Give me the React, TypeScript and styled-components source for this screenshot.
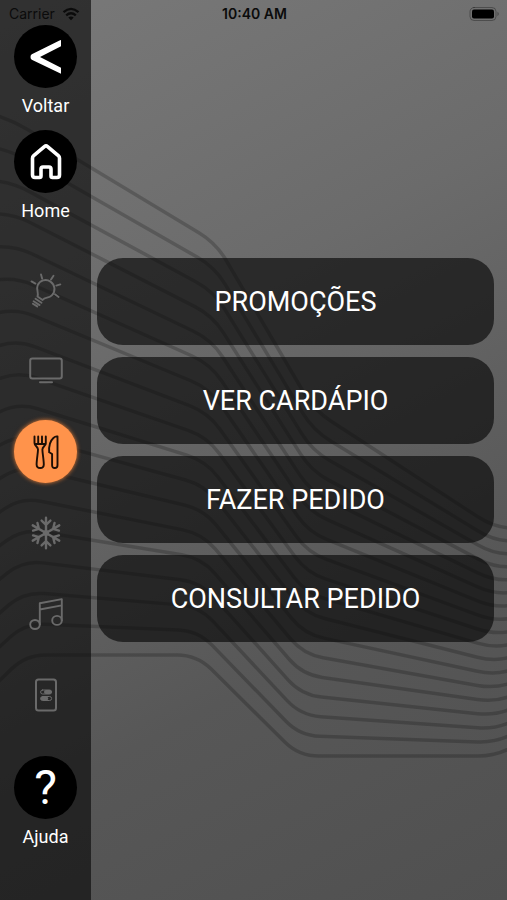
import React from "react";
import styled, { createGlobalStyle } from "styled-components";

const GlobalStyle = createGlobalStyle`
  *, *::before, *::after { box-sizing: border-box; }
  body { margin: 0; background: #5c5c5c; }
  button { font: inherit; color: inherit; border: 0; padding: 0; background: none; cursor: pointer; }
`;

const Screen = styled.div`
  position: relative;
  isolation: isolate;
  display: flex;
  min-height: 100vh;
  overflow: hidden;
  color: #fff;
  font-family: Roboto, "Noto Sans", sans-serif;
  background: linear-gradient(152deg, #797979 0%, #6b6b6b 35%, #575757 70%, #505050 100%);
`;

const Backdrop = styled.svg`
  position: absolute;
  inset: 0;
  z-index: -1;
  width: 100%;
  height: 100%;
  fill: none;
  stroke: #000;
  stroke-opacity: 0.2;
  stroke-width: 3.5;
`;

const StatusBar = styled.header`
  position: absolute;
  inset: 0 0 auto;
  z-index: 1;
  display: grid;
  grid-template-columns: 1fr auto 1fr;
  align-items: center;
  height: 27px;
  padding: 0 7px 0 9px;
  color: #0b0b0b;
  font-family: Inter, sans-serif;
  font-size: 14px;
  pointer-events: none;
`;

const Carrier = styled.span`
  display: flex;
  align-items: center;
  gap: 7px;
`;

const Clock = styled.time`
  font-weight: 600;
`;

const BatterySlot = styled.span`
  display: flex;
  justify-content: flex-end;
`;

const Sidebar = styled.aside`
  flex: none;
  display: flex;
  flex-direction: column;
  align-items: center;
  gap: 6px;
  width: 91px;
  padding: 25px 0 45px;
  background: rgba(10, 10, 10, 0.65);
`;

const LabeledButton = styled.button<{ $last?: boolean }>`
  display: flex;
  flex-direction: column;
  align-items: center;
  margin-top: ${(p) => (p.$last ? "auto" : "0")};
  font-size: 18px;
  line-height: 36px;
`;

const Disc = styled.span`
  display: grid;
  place-items: center;
  width: 63px;
  height: 63px;
  border-radius: 50%;
  background: #000;
`;

const QuestionMark = styled.span`
  font-size: 48px;
  font-weight: 400;
  line-height: 63px;
`;

const CategoryNav = styled.nav`
  display: flex;
  flex-direction: column;
  gap: 18px;
  margin-top: 23px;
`;

const CategoryButton = styled.button<{ $active?: boolean }>`
  display: grid;
  place-items: center;
  width: 63px;
  height: 63px;
  border-radius: 50%;
  color: ${(p) => (p.$active ? "#1d0f06" : "#6a6a6a")};
  background: ${(p) => (p.$active ? "#ff934b" : "transparent")};
  box-shadow: ${(p) => (p.$active ? "0 0 4px #e87d35" : "none")};
`;

const Content = styled.main`
  flex: 1;
  display: flex;
  flex-direction: column;
  justify-content: center;
  gap: 12px;
  min-width: 0;
  padding: 0 13px 0 6px;
`;

const MenuButton = styled.button`
  height: 87px;
  border-radius: 26px;
  background: rgba(10, 10, 10, 0.67);
  font-size: 27px;
  line-height: 32px;
`;

const Glyph = styled.svg`
  display: block;
  fill: none;
  stroke: currentColor;
  stroke-width: 2;
  stroke-linecap: round;
  stroke-linejoin: round;
`;

type Point = [number, number];

const UPPER: Point[] = [[-30, 108], [10, 119], [216, 243], [314, 410], [495, 528], [530, 528]];
const LOWER: Point[] = [[-30, 709], [26, 655], [197, 655], [299, 756], [498, 756], [530, 736]];
const LINE_COUNT = 18;

function contour(t: number) {
  const pts = UPPER.map(([x, y], i): Point => [x + (LOWER[i][0] - x) * t, y + (LOWER[i][1] - y) * t]);
  let d = `M${pts[0].join(" ")}`;
  for (let i = 1; i < pts.length - 1; i++) {
    const [x, y] = pts[i];
    const near = (other: Point) => {
      const len = Math.hypot(other[0] - x, other[1] - y);
      const r = Math.min(20, len / 2) / len;
      return `${x + (other[0] - x) * r} ${y + (other[1] - y) * r}`;
    };
    d += `L${near(pts[i - 1])}Q${x} ${y} ${near(pts[i + 1])}`;
  }
  return `${d}L${pts[pts.length - 1].join(" ")}`;
}

const CONTOURS = Array.from({ length: LINE_COUNT }, (_, i) => contour(i / (LINE_COUNT - 1)));

const WifiIcon = () => (
  <Glyph width="18" height="14" viewBox="0 0 18 14" aria-hidden="true">
    <path d="M1.5 5.2Q9-1.4 16.5 5.2" strokeWidth="2.3" strokeLinecap="butt" />
    <path d="M4.2 8.3Q9 4.2 13.8 8.3" strokeWidth="2.3" strokeLinecap="butt" />
    <path d="M6.3 10.5Q9 8.4 11.7 10.5L9 13.2Z" fill="currentColor" stroke="none" />
  </Glyph>
);

const BatteryIcon = () => (
  <Glyph width="31" height="14" viewBox="0 0 31 14" aria-hidden="true">
    <rect x="1" y=".5" width="26" height="13" rx="4" strokeWidth="1" opacity=".35" />
    <rect x="3" y="2.5" width="22" height="9" rx="2" fill="#000" stroke="none" />
    <path d="M28.5 4.8Q31 7 28.5 9.2Z" fill="currentColor" stroke="none" opacity=".4" />
  </Glyph>
);

const BackIcon = () => (
  <Glyph width="32" height="36" viewBox="0 0 32 36" aria-hidden="true">
    <path d="M31 1.2V7.3L10 18L31 28.7V34.8L1.8 20.8Q.5 20 .5 18T1.8 15.2L29 1.7Q31 .6 31 1.2Z" fill="#fff" stroke="none" />
  </Glyph>
);

const HomeIcon = () => (
  <Glyph width="34" height="36" viewBox="0 0 34 36" aria-hidden="true">
    <path
      d="M3.5 14.2Q3.5 12.7 4.7 11.7L15.4 2.6Q17 1.3 18.6 2.6L29.3 11.7Q30.5 12.7 30.5 14.2V31Q30.5 33.5 28 33.5H23.5Q22 33.5 22 32V25Q22 23 20 23H14Q12 23 12 25V32Q12 33.5 10.5 33.5H6Q3.5 33.5 3.5 31Z"
      strokeWidth="3.6"
    />
  </Glyph>
);

const BulbIcon = () => (
  <Glyph width="34" height="36" viewBox="0 0 34 36" aria-hidden="true">
    <g strokeWidth="1.9">
      <path d="M8.5 24.5C10 21 6.9 17.5 8.7 13.2C10.8 8.2 17 6.6 21.5 9.6C26.3 12.9 26.8 19.5 22.8 23.4C19.8 26.4 16 25 13.6 28Z" />
      <path d="M6.5 26.8L12.5 30.7M4.6 29.2L10.6 33.1M3.9 31.8L8.2 34.4" />
      <path d="M12 2.5L13.2 6.7M24.5 3.8L22 7.6M2.5 9.4L6.4 11.6M31.3 12.4L27.3 13.6M26 22.3L29.6 25" />
    </g>
  </Glyph>
);

const TvIcon = () => (
  <Glyph width="34" height="28" viewBox="0 0 34 28" aria-hidden="true">
    <rect x="1.2" y="1.5" width="31.6" height="20" rx="2.2" />
    <path d="M11 25.2H23" />
  </Glyph>
);

const CutleryIcon = () => (
  <Glyph width="26" height="36" viewBox="0 0 26 36" aria-hidden="true">
    <g strokeWidth="1.9">
      <path d="M1.5 2.5V9C1.5 12 5 12.5 5 15.5C5 18.5 3.6 26 3.6 30.5Q3.6 34 7.2 34T10.8 30.5C10.8 26 9.4 18.5 9.4 15.5C9.4 12.5 12.8 12 12.8 9V2.5" />
      <path d="M5.2 2.5V10M9 2.5V10M2 10H12.4" />
      <path d="M24.5 3V31.2Q24.5 34 21.8 34T19.1 31.2V20L16.2 18.3Q15.4 8.5 20.4 4Q22.6 2 24.5 2.5Z" />
    </g>
  </Glyph>
);

const SnowIcon = () => (
  <Glyph width="34" height="36" viewBox="0 0 34 36" aria-hidden="true">
    {[0, 60, 120, 180, 240, 300].map((angle) => (
      <path
        key={angle}
        transform={`rotate(${angle} 17 18)`}
        d="M17 18V2.7M12.6 5.6L17 9.8L21.4 5.6"
        strokeWidth="2.4"
      />
    ))}
    <circle cx="17" cy="18" r="3" fill="currentColor" stroke="none" />
  </Glyph>
);

const MusicIcon = () => (
  <Glyph width="34" height="34" viewBox="0 0 34 34" aria-hidden="true">
    <g strokeWidth="1.9">
      <ellipse cx="6" cy="27.5" rx="4.8" ry="4.5" />
      <ellipse cx="28" cy="23.4" rx="4.8" ry="4.5" />
      <path d="M10.8 27.5V6.2L32.8 2.1V23.4M10.8 12.5L32.8 8.4" />
    </g>
  </Glyph>
);

const SwitchIcon = () => (
  <Glyph width="22" height="34" viewBox="0 0 22 34" aria-hidden="true">
    <rect x="1" y="1.5" width="20" height="31" rx="2.5" />
    <rect x="5.6" y="12" width="11" height="4" rx="2" strokeWidth="1" />
    <rect x="9" y="12" width="7.6" height="4" rx="2" fill="currentColor" stroke="none" />
    <rect x="5.6" y="18.5" width="11" height="4" rx="2" strokeWidth="1" />
    <rect x="5.6" y="18.5" width="7.6" height="4" rx="2" fill="currentColor" stroke="none" />
  </Glyph>
);

const CATEGORIES = [
  { name: "Iluminação", Icon: BulbIcon },
  { name: "Televisão", Icon: TvIcon },
  { name: "Restaurante", Icon: CutleryIcon, active: true },
  { name: "Climatização", Icon: SnowIcon },
  { name: "Música", Icon: MusicIcon },
  { name: "Interruptores", Icon: SwitchIcon },
];

const OPTIONS = ["PROMOÇÕES", "VER CARDÁPIO", "FAZER PEDIDO", "CONSULTAR PEDIDO"];

export default function App() {
  return (
    <Screen>
      <GlobalStyle />
      <Backdrop viewBox="0 0 507 900" preserveAspectRatio="xMidYMid slice" aria-hidden="true">
        {CONTOURS.map((d) => (
          <path key={d} d={d} />
        ))}
      </Backdrop>
      <StatusBar>
        <Carrier>
          Carrier
          <WifiIcon />
        </Carrier>
        <Clock>10:40 AM</Clock>
        <BatterySlot>
          <BatteryIcon />
        </BatterySlot>
      </StatusBar>
      <Sidebar>
        <LabeledButton type="button">
          <Disc>
            <BackIcon />
          </Disc>
          Voltar
        </LabeledButton>
        <LabeledButton type="button">
          <Disc>
            <HomeIcon />
          </Disc>
          Home
        </LabeledButton>
        <CategoryNav>
          {CATEGORIES.map(({ name, Icon, active }) => (
            <CategoryButton key={name} type="button" aria-label={name} aria-pressed={!!active} $active={active}>
              <Icon />
            </CategoryButton>
          ))}
        </CategoryNav>
        <LabeledButton type="button" $last>
          <Disc>
            <QuestionMark aria-hidden="true">?</QuestionMark>
          </Disc>
          Ajuda
        </LabeledButton>
      </Sidebar>
      <Content>
        {OPTIONS.map((option) => (
          <MenuButton key={option} type="button">
            {option}
          </MenuButton>
        ))}
      </Content>
    </Screen>
  );
}
